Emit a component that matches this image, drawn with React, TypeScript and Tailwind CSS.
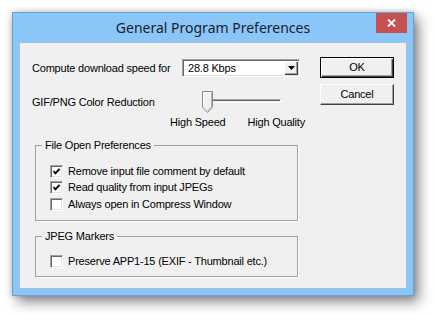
import React from "react";

const ui = "font-['Liberation_Sans',Arial,sans-serif] text-[11px] tracking-[-0.2px] text-black";

function CheckRow({ checked, label }: { checked: boolean; label: string }) {
  return (
    <div className="flex h-[16.5px] items-center gap-[5px]">
      <span className="flex h-[13px] w-[13px] shrink-0 items-center justify-center border border-t-[#a0a0a0] border-l-[#a0a0a0] border-b-white border-r-white bg-white shadow-[inset_1px_1px_0_#696969,inset_-1px_-1px_0_#e3e3e3]">
        {checked && (
          <svg width="9" height="9" viewBox="0 0 9 9">
            <path d="M1.5 4 L3.5 6.3 L7.6 1.8" fill="none" stroke="#000" strokeWidth="1.8" />
          </svg>
        )}
      </span>
      <span className="leading-[13px]">{label}</span>
    </div>
  );
}

function Group({ title, children, className }: { title: string; children: React.ReactNode; className?: string }) {
  return (
    <fieldset className={`ml-[3px] w-[263px] border border-[#a0a0a0] p-0 shadow-[1px_1px_0_#fff] ${className ?? ""}`}>
      <legend className="ml-[6px] bg-[#f0f0f0] px-[3px] leading-[13px]">{title}</legend>
      {children}
    </fieldset>
  );
}

export default function App() {
  return (
    <div className="h-[316px] w-[434px] bg-white pl-[12px] pt-[12px]">
      <div className="w-[402px] h-[284px] border border-[#6a9fd4] bg-[#8ac6f8] shadow-[0_0_6px_rgba(0,0,0,0.2),5px_6px_12px_rgba(0,0,0,0.45)]">
        {/* title bar */}
        <div className="flex h-[29px] items-start">
          <div className="w-[37px]" />
          <div className="flex-1 text-center font-['Noto_Sans',sans-serif] text-[14px] leading-[29px] text-[#1c1c28]">
            General Program Preferences
          </div>
          <div className="mr-[6px] flex h-[20px] w-[31px] items-center justify-center bg-[#c75050]">
            <svg width="9" height="8" viewBox="0 0 9 8">
              <path d="M1 0.5 L8 7.5 M8 0.5 L1 7.5" stroke="#fff" strokeWidth="1.8" />
            </svg>
          </div>
        </div>

        {/* client */}
        <div className={`mx-[6px] flex h-[247px] border border-[#a9bfd6] bg-[#f0f0f0] pl-[12px] pt-[14px] ${ui}`}>
          <div className="mt-[2px] flex w-[268px] shrink-0 flex-col">
            <div className="flex h-[18px] items-center justify-between">
              <span>Compute download speed for</span>
              <div className="flex h-[18px] w-[118px] border border-t-[#a0a0a0] border-l-[#a0a0a0] border-b-white border-r-white bg-white p-px shadow-[inset_1px_1px_0_#696969,inset_-1px_-1px_0_#e3e3e3]">
                <span className="flex-1 pl-[4px] leading-[14px]">28.8 Kbps</span>
                <span className="flex h-[14px] w-[14px] items-center justify-center bg-[#f0f0f0] shadow-[inset_1px_1px_0_#fff,inset_-1px_-1px_0_#404040,inset_-2px_-2px_0_#a0a0a0]">
                  <svg width="7" height="4" viewBox="0 0 7 4">
                    <path d="M0 0 H7 L3.5 4 Z" fill="#000" />
                  </svg>
                </span>
              </div>
            </div>

            <div className="mt-[14px] flex">
              <div className="flex h-[22px] w-[138px] shrink-0 items-center">GIF/PNG Color Reduction</div>
              <div className="w-[135px] shrink-0">
                <div className="relative h-[22px] pt-[8px]">
                  <div className="ml-[35px] h-[4px] w-[76px] border border-t-[#a0a0a0] border-l-[#a0a0a0] border-b-white border-r-white shadow-[inset_1px_1px_0_#696969]" />
                  <svg className="absolute left-[32px] top-0" width="11" height="22" viewBox="0 0 11 22">
                    <path d="M0.5 0.5 H10.5 V16 L5.5 21.5 L0.5 16 Z" fill="#f0f0f0" stroke="#8a8a8a" />
                    <path d="M1.5 15.5 V1.5 H9.5" fill="none" stroke="#fff" />
                    <path d="M9.5 1.5 V15.6 L5.5 20" fill="none" stroke="#b0b0b0" />
                  </svg>
                </div>
                <div className="mt-[2px] flex h-[14px] w-[135px] items-center justify-between whitespace-nowrap">
                  <span>High Speed</span>
                  <span>High Quality</span>
                </div>
              </div>
            </div>

            <Group title="File Open Preferences" className="mt-[10px]">
              <div className="pb-[7px] pl-[14px] pt-[11px]">
                <CheckRow checked label="Remove input file comment by default" />
                <CheckRow checked label="Read quality from input JPEGs" />
                <CheckRow checked={false} label="Always open in Compress Window" />
              </div>
            </Group>

            <Group title="JPEG Markers" className="mt-[9px]">
              <div className="pb-[6px] pl-[14px] pt-[11px]">
                <CheckRow checked={false} label="Preserve APP1-15 (EXIF - Thumbnail etc.)" />
              </div>
            </Group>
          </div>

          <div className="ml-[20px] flex flex-col gap-[6px]">
            <button className="h-[21px] w-[74px] border border-black bg-[#f0f0f0] shadow-[inset_1px_1px_0_#fff,inset_-1px_-1px_0_#404040,inset_-2px_-2px_0_#a0a0a0]">
              OK
            </button>
            <button className="h-[21px] w-[74px] border border-t-white border-l-white border-b-[#404040] border-r-[#404040] bg-[#f0f0f0] shadow-[inset_-1px_-1px_0_#a0a0a0]">
              Cancel
            </button>
          </div>
        </div>
      </div>
    </div>
  );
}
